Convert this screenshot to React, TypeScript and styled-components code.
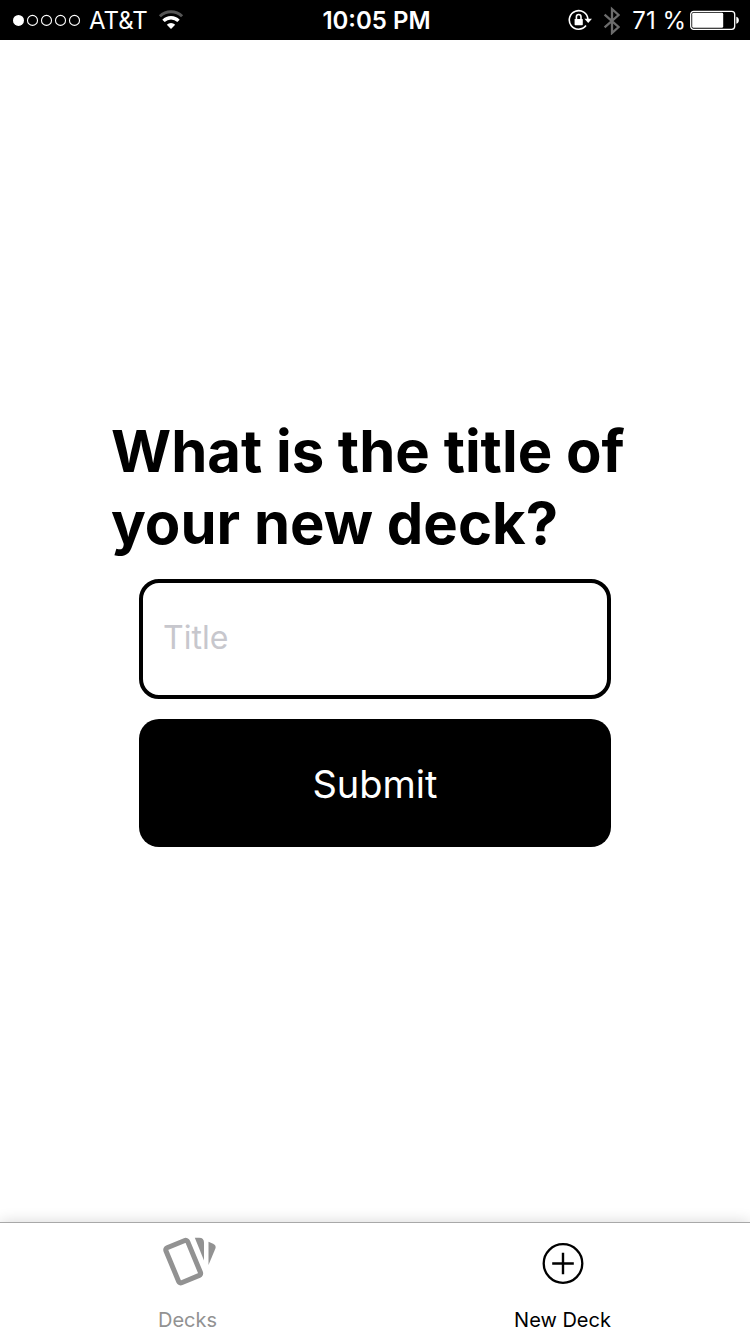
import React, { useState } from "react";
import styled, { createGlobalStyle } from "styled-components";

const GlobalStyle = createGlobalStyle`
  *, *::before, *::after { box-sizing: border-box; }
  body {
    margin: 0;
    background: #fff;
    color: #000;
    font-family: Inter, "Liberation Sans", sans-serif;
  }
`;

const Screen = styled.div`
  display: flex;
  flex-direction: column;
  min-height: 100vh;
`;

const StatusBar = styled.header`
  display: grid;
  grid-template-columns: 1fr auto 1fr;
  align-items: center;
  height: 40px;
  padding: 0 10px 0 13px;
  background: #000;
  color: #fff;
  font-size: 24px;
  line-height: 36px;
  white-space: nowrap;
`;

const StatusGroup = styled.div<{ $end?: boolean }>`
  display: flex;
  align-items: center;
  justify-content: ${({ $end }) => ($end ? "flex-end" : "flex-start")};

  svg {
    display: block;
    flex: none;
  }
`;

const Carrier = styled.span`
  margin: 0 10px 0 8px;
  padding-top: 2px;
`;

const Clock = styled.time`
  padding-top: 2px;
  font-weight: 600;
`;

const Percent = styled.span`
  margin: 0 4px 0 12px;
  padding-top: 2px;
`;

const Main = styled.main`
  flex: 1;
  display: flex;
  align-items: center;
  justify-content: center;
`;

const DeckForm = styled.form`
  display: flex;
  flex-direction: column;
  gap: 20px;
  width: 100%;
  max-width: 528px;
`;

const Question = styled.label`
  font-size: 58px;
  font-weight: 700;
  line-height: 72px;
`;

const TitleInput = styled.input`
  height: 120px;
  margin: 0 28px;
  padding: 0 20px 4px;
  border: 4px solid #000;
  border-radius: 20px;
  background: #fff;
  color: #000;
  font: inherit;
  font-size: 32px;
  outline: none;

  &::placeholder {
    color: #c7c7cd;
    opacity: 1;
  }
`;

const SubmitButton = styled.button`
  height: 128px;
  margin: 0 28px;
  padding: 2px 0 0;
  border: 0;
  border-radius: 20px;
  background: #000;
  color: #fff;
  font: inherit;
  font-size: 38px;
  cursor: pointer;
`;

const TabBar = styled.nav`
  display: flex;
  height: 112px;
  border-top: 1px solid #a8a8a8;
  background: #fff;
  box-shadow: 0 0 14px rgba(0, 0, 0, 0.16);
`;

const Tab = styled.a<{ $active?: boolean }>`
  flex: 1;
  display: flex;
  flex-direction: column;
  align-items: center;
  justify-content: space-between;
  padding-top: 10px;
  color: ${({ $active }) => ($active ? "#000" : "#929292")};
  font-size: 20px;
  line-height: 28px;
  text-decoration: none;

  svg {
    display: block;
  }
`;

const SignalIcon = () => (
  <svg width="68" height="12" viewBox="0 0 68 12" aria-hidden="true">
    <circle cx="5.5" cy="6.4" r="5.5" fill="#fff" />
    {[19.5, 33.5, 47.5, 61.5].map((cx) => (
      <circle key={cx} cx={cx} cy="6.4" r="5" fill="none" stroke="#fff" strokeWidth="1.1" />
    ))}
  </svg>
);

const WifiIcon = () => (
  <svg width="26" height="20" viewBox="0 0 26 20" fill="none" aria-hidden="true">
    <path d="M1.9 6.3a15.7 15.7 0 0 1 22.2 0" stroke="#555" strokeWidth="3" />
    <path d="M5.5 10.9a10.6 10.6 0 0 1 15 0" stroke="#fff" strokeWidth="3.4" />
    <path d="M13 19l-4.2-4.2a6 6 0 0 1 8.4 0z" fill="#fff" />
  </svg>
);

const RotationLockIcon = () => (
  <svg width="24" height="22" viewBox="0 0 24 22" fill="none" aria-hidden="true">
    <path d="M18 16.6A9.3 9.3 0 1 1 19.9 10.4" stroke="#fff" strokeWidth="1.6" />
    <path d="M16.4 9.8h7.6l-3.8 4.2z" fill="#fff" />
    <rect x="6.6" y="10" width="8.2" height="6.2" rx="0.6" fill="#fff" />
    <path d="M8.4 10.4V7.8a2.3 2.3 0 0 1 4.6 0v2.6" stroke="#fff" strokeWidth="1.6" />
  </svg>
);

const BluetoothIcon = () => (
  <svg width="28" height="30" viewBox="0 0 28 30" fill="none" aria-hidden="true">
    <path
      d="M12.6 9.6l14 12.4-6.6 6V4l6.6 6-14 12.4"
      stroke="#6c6c6c"
      strokeWidth="2.3"
      strokeLinejoin="miter"
    />
  </svg>
);

const BatteryIcon = () => (
  <svg width="50" height="20" viewBox="0 0 50 20" aria-hidden="true">
    <rect x="0.7" y="1.3" width="44" height="18" rx="3" fill="none" stroke="#fff" strokeWidth="1.3" />
    <rect x="2.2" y="2.8" width="31" height="15" rx="1.4" fill="#fff" />
    <path d="M46.3 6.8c3.4.8 3.4 6.2 0 7z" fill="#fff" />
  </svg>
);

const CardsIcon = () => (
  <svg width="60" height="60" viewBox="0 0 60 60" aria-hidden="true">
    <rect
      x="-11.8"
      y="-18.9"
      width="23.6"
      height="37.8"
      rx="2.2"
      transform="translate(25.2 28.6) rotate(-22.5)"
      fill="none"
      stroke="#929292"
      strokeWidth="5"
    />
    <path d="M36.8 4.8h4.4c3.2 0 4.8 1.6 4.8 4.8v17.8z" fill="#929292" />
    <path d="M50.5 8.8l4.6 2c2.3 1 3.1 2.7 2.2 5L50.5 32z" fill="#929292" />
  </svg>
);

const AddIcon = () => (
  <svg width="60" height="60" viewBox="0 0 60 60" fill="none" stroke="#000" aria-hidden="true">
    <circle cx="30" cy="30.5" r="19.3" strokeWidth="2.3" />
    <path d="M30 19.7v21.6M19.2 30.5h21.6" strokeWidth="2.4" />
  </svg>
);

export default function App() {
  const [title, setTitle] = useState("");

  return (
    <>
      <GlobalStyle />
      <Screen>
        <StatusBar>
          <StatusGroup>
            <SignalIcon />
            <Carrier>AT&amp;T</Carrier>
            <WifiIcon />
          </StatusGroup>
          <Clock>10:05 PM</Clock>
          <StatusGroup $end>
            <RotationLockIcon />
            <BluetoothIcon />
            <Percent>71 %</Percent>
            <BatteryIcon />
          </StatusGroup>
        </StatusBar>
        <Main>
          <DeckForm onSubmit={(event) => event.preventDefault()}>
            <Question htmlFor="deck-title">What is the title of your new deck?</Question>
            <TitleInput
              id="deck-title"
              type="text"
              placeholder="Title"
              value={title}
              onChange={(event) => setTitle(event.target.value)}
            />
            <SubmitButton type="submit">Submit</SubmitButton>
          </DeckForm>
        </Main>
        <TabBar>
          <Tab href="#decks">
            <CardsIcon />
            Decks
          </Tab>
          <Tab href="#new-deck" $active aria-current="page">
            <AddIcon />
            New Deck
          </Tab>
        </TabBar>
      </Screen>
    </>
  );
}
